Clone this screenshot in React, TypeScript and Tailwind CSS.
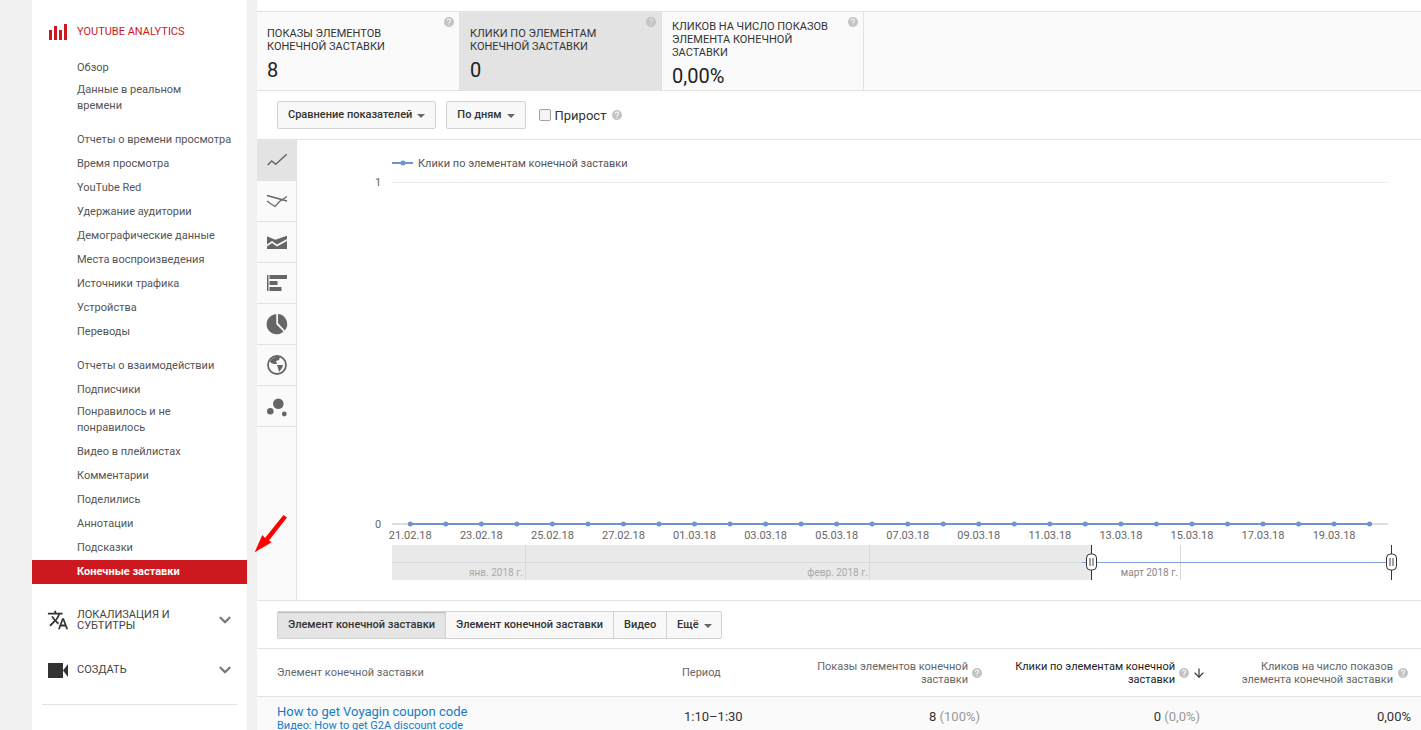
import React from "react";
import { ArrowDown, ChevronDown } from "lucide-react";

const HELP =
  "M12 2C6.48 2 2 6.48 2 12s4.48 10 10 10 10-4.48 10-10S17.52 2 12 2zm1 17h-2v-2h2v2zm2.07-7.75l-.9.92C13.45 12.9 13 13.5 13 15h-2v-.5c0-1.1.45-2.1 1.17-2.83l1.24-1.26c.37-.36.59-.86.59-1.41 0-1.1-.9-2-2-2s-2 .9-2 2H8c0-2.21 1.79-4 4-4s4 1.79 4 4c0 .88-.36 1.68-.93 2.25z";
const TRANSLATE =
  "M12.87 15.07l-2.54-2.51.03-.03c1.74-1.94 2.98-4.17 3.71-6.53H17V4h-7V2H8v2H1v1.99h11.17C11.5 7.92 10.44 9.75 9 11.35 8.07 10.32 7.3 9.19 6.69 8h-2c.73 1.63 1.73 3.17 2.98 4.56l-5.09 5.02L4 19l5-5 3.11 3.11.76-2.04zM18.5 10h-2L12 22h2l1.12-3h4.75L21 22h2l-4.5-12zm-2.62 7l1.62-4.33L19.12 17h-3.24z";

const Help = ({ className = "" }: { className?: string }) => (
  <svg viewBox="0 0 24 24" className={`h-[12px] w-[12px] shrink-0 fill-[#c4c4c4] ${className}`}>
    <path d={HELP} />
  </svg>
);

const Caret = () => <span className="h-0 w-0 border-x-[4px] border-t-[4px] border-x-transparent border-t-[#666]" />;

type NavRow = { label: string; two?: boolean; active?: boolean };

const navGroups: NavRow[][] = [
  [{ label: "Обзор" }, { label: "Данные в реальном времени", two: true }],
  [
    { label: "Отчеты о времени просмотра" },
    { label: "Время просмотра" },
    { label: "YouTube Red" },
    { label: "Удержание аудитории" },
    { label: "Демографические данные" },
    { label: "Места воспроизведения" },
    { label: "Источники трафика" },
    { label: "Устройства" },
    { label: "Переводы" },
  ],
  [
    { label: "Отчеты о взаимодействии" },
    { label: "Подписчики" },
    { label: "Понравилось и не понравилось", two: true },
    { label: "Видео в плейлистах" },
    { label: "Комментарии" },
    { label: "Поделились" },
    { label: "Аннотации" },
    { label: "Подсказки" },
    { label: "Конечные заставки", active: true },
  ],
];

const Sidebar = () => (
  <aside className="w-[215px] shrink-0 bg-white pt-[20px] text-[11px] text-[#555]">
    <div className="flex h-6 items-center">
      <svg viewBox="0 0 18 16" className="ml-[17px] mr-[10px] h-4 w-[18px] fill-[#cc181e]">
        <rect x="0" y="6" width="3" height="10" />
        <rect x="5" y="2" width="3" height="14" />
        <rect x="10" y="6" width="3" height="10" />
        <rect x="15" y="0" width="3" height="16" />
      </svg>
      <span className="text-[#cc181e]">YOUTUBE ANALYTICS</span>
    </div>
    <div className="mt-3 flex flex-col gap-[10px]">
      {navGroups.map((group, i) => (
        <div key={i}>
          {group.map((row) => (
            <div
              key={row.label}
              className={
                row.two
                  ? "pl-[45px] pr-[40px] pt-[2px] pb-[4px] leading-4"
                  : row.active
                    ? "flex h-6 items-center bg-[#cc181e] pl-[45px] font-bold text-white"
                    : "flex h-6 items-center pl-[45px]"
              }
            >
              {row.label}
            </div>
          ))}
        </div>
      ))}
    </div>
    <div className="mt-[11px] flex h-[50px] items-center text-[#444]">
      <svg viewBox="0 0 24 24" className="ml-[15px] mr-[8px] h-[22px] w-[22px] fill-[#333]">
        <path d={TRANSLATE} />
      </svg>
      <span className="w-[130px] leading-[11px]">ЛОКАЛИЗАЦИЯ И СУБТИТРЫ</span>
      <ChevronDown className="ml-[9px] h-[18px] w-[18px] text-[#777]" strokeWidth={3} />
    </div>
    <div className="flex h-[50px] items-center text-[#444]">
      <svg viewBox="0 0 20 15" className="ml-[16px] mr-[9px] h-[15px] w-[20px] fill-[#333]">
        <rect x="0" y="0" width="15" height="15" />
        <path d="M15 7.5 20 1V14z" />
      </svg>
      <span className="w-[130px]">СОЗДАТЬ</span>
      <ChevronDown className="ml-[9px] h-[18px] w-[18px] text-[#777]" strokeWidth={3} />
    </div>
    <div className="mx-[10px] mt-[9px] border-t border-[#e2e2e2]" />
  </aside>
);

const cards = [
  { title: "Показы элементов конечной заставки", value: "8", w: "w-[203px]", on: false },
  { title: "Клики по элементам конечной заставки", value: "0", w: "w-[202px]", on: true },
  { title: "Кликов на число показов элемента конечной заставки", value: "0,00%", w: "w-[202px]", on: false },
];

const Cards = () => (
  <div className="mt-[11px] flex h-[80px] border-y border-[#e2e2e2] bg-[#fafafa]">
    {cards.map((c) => (
      <div
        key={c.title}
        className={`relative flex flex-col justify-center border-r border-[#e2e2e2] pl-[10px] pr-[24px] pt-[6px] text-[#333] ${c.w} ${
          c.on ? "bg-[#e3e3e3]" : ""
        }`}
      >
        <Help className="absolute right-[4px] top-[4px]" />
        <div className="text-[11px] uppercase leading-[13px]">{c.title}</div>
        <div className="mt-[5px] text-[20px] leading-6 text-[#222]">{c.value}</div>
      </div>
    ))}
  </div>
);

const btn = "flex h-[28px] items-center gap-[5px] rounded-[2px] border border-[#d3d3d3] bg-[#f8f8f8] px-[10px] pt-px text-[11px] font-medium text-[#333]";

const Toolbar = () => (
  <div className="flex h-[49px] items-center border-b border-[#e2e2e2] pl-[20px]">
    <div className={btn}>
      Сравнение показателей <Caret />
    </div>
    <div className={`${btn} ml-[10px]`}>
      По дням <Caret />
    </div>
    <span className="ml-[13px] h-[12px] w-[12px] rounded-[2px] border border-[#a0a0a0] bg-[#f4f4f4]" />
    <span className="ml-[4px] pt-px text-[13px] text-[#333]">Прирост</span>
    <Help className="ml-[5px]" />
  </div>
);

const chartIcons = [
  <path d="M.7 15 4.7 11l4 3.300 11-10" fill="none" stroke="#666" strokeWidth="1.5" />,
  <g fill="none" stroke="#666" strokeWidth="1.300">
    <path d="M0 4.500 9 7 20 10" />
    <path d="M0 10 4 13 8 15.500 12.500 10.500 20 5.500" />
  </g>,
  <g fill="#666">
    <path d="M0 4.300 8.300 7.700 20 3.700V7L10 12.500 5 9 0 12.500z" />
    <path d="M0 14.500 5 11 10 14.500 20 9V17H0z" />
  </g>,
  <g fill="#666">
    <rect x="0" y="2" width="1.500" height="16" />
    <rect x="2.500" y="2" width="17.500" height="4" />
    <rect x="2.500" y="8" width="8" height="4" />
    <rect x="2.500" y="14" width="12" height="4" />
  </g>,
  <g fill="#666">
    <path d="M9.300 10.300V.3A10 10 0 1 0 16.500 17.500z" />
    <path d="M11 9V.1A10 10 0 0 1 17.800 16.500z" />
  </g>,
  <g>
    <circle cx="10" cy="10" r="9" fill="none" stroke="#666" strokeWidth="1.800" />
    <path d="M3 6C5 3 9 1 13 2L12 5 9 6 10 9 7 9 4 8zM10 10 16 10 15 13 12 17 11 13z" fill="#666" />
  </g>,
  <g fill="#666">
    <circle cx="11.300" cy="7.700" r="5.300" />
    <circle cx="3.300" cy="15.300" r="3.300" />
    <circle cx="17.300" cy="18" r="2.400" />
  </g>,
];

const ChartTabs = () => (
  <div className="w-[40px] shrink-0 border-r border-[#e2e2e2] bg-[#fafafa]">
    {chartIcons.map((icon, i) => (
      <div
        key={i}
        className={`flex h-[41px] items-center justify-center border-b border-[#e2e2e2] ${i === 0 ? "bg-[#e3e3e3]" : ""}`}
      >
        <svg viewBox="0 0 20 20" className="h-5 w-5 overflow-visible">
          {icon}
        </svg>
      </div>
    ))}
  </div>
);

const dates = ["21.02.18", "23.02.18", "25.02.18", "27.02.18", "01.03.18", "03.03.18", "05.03.18", "07.03.18", "09.03.18", "11.03.18", "13.03.18", "15.03.18", "17.03.18", "19.03.18"];
const STEP = 35.53;

const Handle = ({ x }: { x: number }) => (
  <g>
    <path d={`M${x} 545V580`} stroke="#333" strokeWidth="1" />
    <rect x={x - 5} y="554" width="10" height="16" rx="4" fill="#fff" stroke="#333" />
    <path d={`M${x - 1.500} 558V566M${x + 1.500} 558V566`} stroke="#444" strokeWidth="1" />
  </g>
);

const Chart = () => (
  <svg viewBox="297 140 1124 460" className="h-[460px] flex-1" fontFamily="Roboto, sans-serif">
    <path d="M392 163H413" stroke="#6d94cd" strokeWidth="2" />
    <circle cx="403" cy="163" r="2.500" fill="#6d94cd" />
    <text x="418" y="167" fontSize="11" fill="#555">
      Клики по элементам конечной заставки
    </text>
    <path d="M392 182.500H1388" stroke="#ededed" />
    <text x="375" y="186" fontSize="11" fill="#666">1</text>
    <text x="375" y="528" fontSize="11" fill="#666">0</text>
    <path d="M392 524H1388" stroke="#dedede" strokeWidth="2" />
    <path d="M410 524H1370" stroke="#6d94cd" strokeWidth="2" />
    {Array.from({ length: 28 }, (_, i) => (
      <circle key={i} cx={410.3 + i * STEP} cy="524" r="2.500" fill="#6d94cd" />
    ))}
    {dates.map((d, i) => (
      <text key={d} x={410.3 + i * 2 * STEP} y="539" fontSize="11" fill="#666" textAnchor="middle">
        {d}
      </text>
    ))}
    <rect x="392" y="545" width="699" height="35" fill="#e9e9e9" />
    <path d="M392 562.500H1091" stroke="#d9d9d9" />
    <path d="M525.500 545V580M869.500 545V580M1180.500 545V580" stroke="#d9d9d9" />
    <text x="523" y="576" fontSize="10" fill="#aaa" textAnchor="end">янв. 2018 г.</text>
    <text x="868" y="576" fontSize="10" fill="#aaa" textAnchor="end">февр. 2018 г.</text>
    <text x="1178" y="576" fontSize="10" fill="#888" textAnchor="end">март 2018 г.</text>
    <path d="M1082 562.500H1391" stroke="#7fa3d8" />
    <Handle x={1091.500} />
    <Handle x={1391.500} />
  </svg>
);

const seg = "flex h-full items-center whitespace-nowrap border-r border-[#d3d3d3] pl-[10px] pt-[2px] text-[11px] font-medium text-[#333]";

const Segments = () => (
  <div className="flex h-[49px] items-center border-y border-[#e2e2e2] pl-[20px]">
    <div className="flex h-[28px] rounded-[2px] border border-[#d3d3d3] bg-[#f8f8f8]">
      <div className={`${seg} w-[168px] bg-[#e5e5e5] shadow-[inset_0_1px_1px_#bbb]`}>Элемент конечной заставки</div>
      <div className={`${seg} w-[168px]`}>Элемент конечной заставки</div>
      <div className={`${seg} w-[53px]`}>Видео</div>
      <div className="flex w-[54px] items-center gap-[5px] pl-[10px] pt-[2px] text-[11px] font-medium text-[#333]">
        Ещё <Caret />
      </div>
    </div>
  </div>
);

const Table = () => (
  <div className="text-[11px] text-[#666]">
    <div className="flex h-[48px] items-center border-b border-[#e2e2e2]">
      <div className="w-[425px] pl-[20px] pt-[2px]">Элемент конечной заставки</div>
      <div className="w-[100px] pt-[2px]">Период</div>
      <div className="flex w-[201px] items-center justify-end gap-[3px] leading-[13px]">
        <span className="w-[160px] text-right">Показы элементов конечной заставки</span>
        <Help />
      </div>
      <div className="flex w-[223px] items-center justify-end gap-[3px] leading-[13px] text-[#222]">
        <span className="w-[170px] text-right">Клики по элементам конечной заставки</span>
        <Help />
        <ArrowDown className="-ml-px h-[14px] w-[14px] text-[#333]" />
      </div>
      <div className="flex w-[203px] items-center justify-end gap-[4px] leading-[13px]">
        <span className="w-[160px] text-right">Кликов на число показов элемента конечной заставки</span>
        <Help />
      </div>
    </div>
    <div className="flex h-[60px] bg-[#fafafa] pt-[6px] text-[13px] text-[#333]">
      <div className="w-[425px] pl-[20px] text-[#167ac6]">
        <div className="leading-[17px]">How to get Voyagin coupon code</div>
        <div className="text-[11px] leading-[11px]">Видео: How to get G2A discount code</div>
      </div>
      <div className="w-[100px] pl-[2px] pt-[6px] leading-[16px]">1:10–1:30</div>
      <div className="w-[198px] pt-[6px] text-right leading-[16px]">
        8 <span className="text-[#999]">(100%)</span>
      </div>
      <div className="w-[220px] pt-[6px] text-right leading-[16px]">
        0 <span className="text-[#999]">(0,0%)</span>
      </div>
      <div className="w-[211px] pt-[6px] text-right leading-[16px]">0,00%</div>
    </div>
  </div>
);

export default function App() {
  return (
    <div className="relative flex h-[730px] overflow-hidden bg-[#f1f1f1] pl-[32px] font-['Roboto',sans-serif]">
      <Sidebar />
      <main className="ml-[10px] h-full flex-1 bg-white">
        <Cards />
        <Toolbar />
        <div className="flex h-[460px]">
          <ChartTabs />
          <Chart />
        </div>
        <Segments />
        <Table />
      </main>
      <svg viewBox="0 0 40 42" className="absolute left-[252px] top-[514px] h-[42px] w-[40px]">
        <path d="M2.700 38.300 10.300 21 13 24 31.500 1 35 3.500 17 26.500 19.700 28.300z" fill="#f00" />
      </svg>
    </div>
  );
}
